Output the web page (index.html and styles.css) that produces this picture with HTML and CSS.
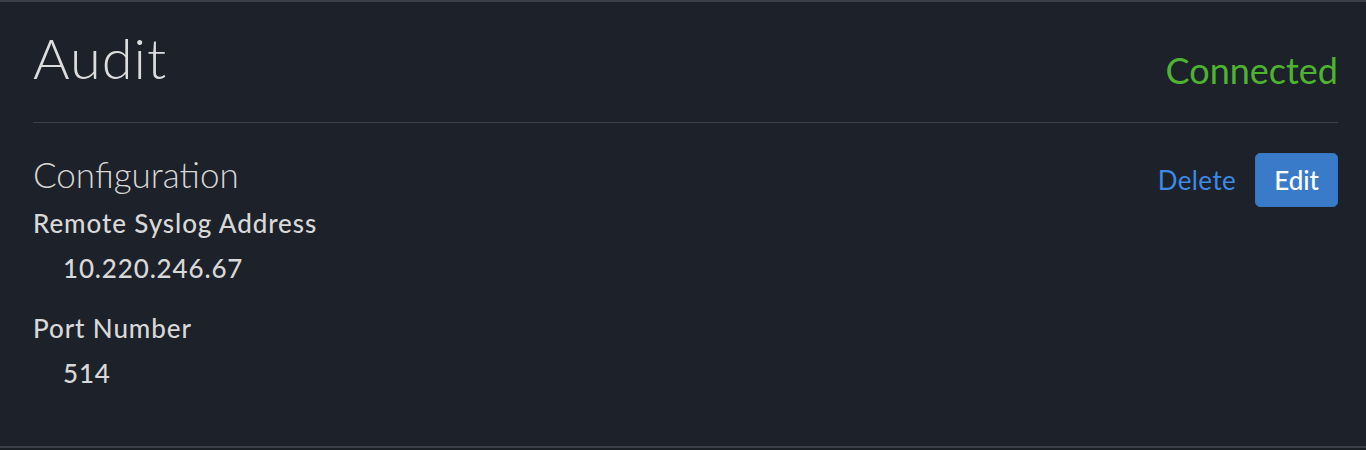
FILE: index.html
```html
<!DOCTYPE html>
<html>
<head>
<meta charset="utf-8">
<link rel="stylesheet" href="styles.css">
</head>
<body>
<div class="panel">
  <div class="header">
    <h1 class="title">Audit</h1>
    <span class="status">Connected</span>
  </div>
  <div class="section">
    <div class="details">
      <h2 class="section-title">Configuration</h2>
      <div class="field">
        <div class="label">Remote Syslog Address</div>
        <div class="value">10.220.246.67</div>
      </div>
      <div class="field">
        <div class="label">Port Number</div>
        <div class="value">514</div>
      </div>
    </div>
    <div class="actions">
      <a class="link-btn">Delete</a>
      <button class="btn-primary">Edit</button>
    </div>
  </div>
</div>
</body>
</html>
```
FILE: styles.css
```css
html, body {
  margin: 0;
  padding: 0;
  background: #1a1e25;
  font-family: "Lato", "Open Sans", sans-serif;
}
.panel {
  height: 444px;
  background: #1d2129;
  border-top: 2px solid #3a3f48;
  border-bottom: 2px solid #3a404a;
  padding: 0 28px 0 33px;
}
.header {
  display: flex;
  justify-content: space-between;
  align-items: baseline;
  padding-top: 28px;
  padding-bottom: 35px;
  border-bottom: 1px solid #39424e;
}
.title {
  margin: 0;
  font-size: 56px;
  line-height: 1;
  font-weight: 300;
  letter-spacing: 1px;
  color: #dcdcdc;
}
.status {
  font-size: 36px;
  color: #4db331;
  font-weight: 400;
  position: relative;
  top: 5px;
}
.section {
  display: flex;
  justify-content: space-between;
  align-items: flex-start;
  padding-top: 30px;
}
.section-title {
  margin: 0 0 13px;
  font-size: 35px;
  line-height: 1.2;
  font-weight: 300;
  color: #d6d6d6;
}
.field {
  margin-bottom: 30px;
}
.label {
  font-size: 26px;
  font-weight: 500;
  color: #d8d8d8;
  line-height: 30px;
  letter-spacing: 0.9px;
}
.value {
  font-size: 26px;
  font-weight: 500;
  color: #d8d8d8;
  padding: 15px 0 0 30px;
  line-height: 30px;
  letter-spacing: 0.85px;
}
.actions {
  display: flex;
  align-items: center;
  gap: 19px;
}
.link-btn {
  font-size: 26px;
  color: #3d8ae6;
  letter-spacing: 0.4px;
  cursor: pointer;
}
.btn-primary {
  font-family: inherit;
  font-size: 26px;
  font-weight: 500;
  color: #ffffff;
  background: #3a7bc9;
  border: 1px solid #3675bf;
  border-radius: 5px;
  padding: 10px 18px 10px;
  height: 54px;
}
```
